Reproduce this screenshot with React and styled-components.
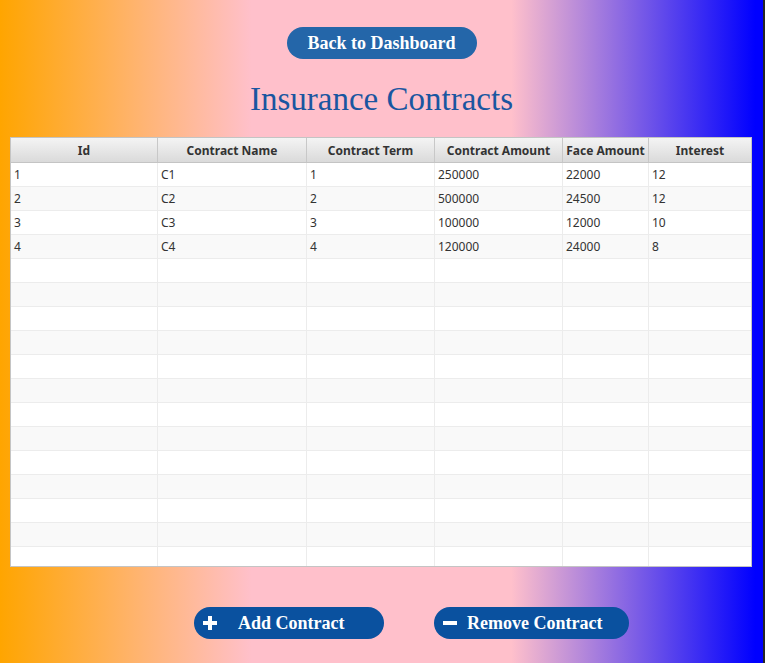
import React from "react";
import styled, { createGlobalStyle } from "styled-components";

const Global = createGlobalStyle`
  html, body { margin: 0; padding: 0; background: #2b2b2b; }
  #root { width: 765px; height: 663px; }
`;

const Frame = styled.div`
  width: 763px;
  height: 661px;
  border-right: 2px solid #262626;
  border-bottom: 2px solid #333333;
  background: linear-gradient(to right, #ffa500 0%, #ffc0cb 33%, #ffc0cb 67%, #0000ff 99%);
  display: flex;
  flex-direction: column;
  align-items: center;
  padding-top: 27px;
  box-sizing: content-box;
  overflow: hidden;
`;

const PillButton = styled.button`
  height: 32px;
  width: ${(p) => p.$w}px;
  border: none;
  border-radius: 16px;
  background: ${(p) => p.$bg};
  color: #ffffff;
  font-family: "Liberation Serif", "Times New Roman", serif;
  font-weight: bold;
  font-size: 18px;
  display: flex;
  align-items: center;
  justify-content: ${(p) => (p.$icon ? "flex-start" : "center")};
  padding: 0 0 0 ${(p) => (p.$icon ? 9 : 0)}px;
  cursor: pointer;
  box-sizing: border-box;
`;

const IconBox = styled.span`
  display: inline-flex;
  width: 14px;
  height: 14px;
  margin-right: ${(p) => p.$gap}px;
`;

const Title = styled.h1`
  margin: 20px 0 0;
  font-family: "Liberation Serif", "Times New Roman", serif;
  font-weight: normal;
  font-size: 33px;
  line-height: 40px;
  color: #1a56a0;
`;

const Table = styled.div`
  margin-top: 18px;
  align-self: flex-start;
  margin-left: 10px;
  width: 742px;
  height: 430px;
  background: #ffffff;
  border: 1px solid #c4c4c4;
  box-sizing: border-box;
  overflow: hidden;
  font-family: "Noto Sans", "Open Sans", sans-serif;
  font-size: 12px;
  color: #333333;
`;

const cols = "147px 149px 128px 128px 86px 1fr";

const HeaderRow = styled.div`
  display: grid;
  grid-template-columns: ${cols};
  height: 24px;
  background: linear-gradient(to bottom, #f4f4f4, #dadada);
  border-bottom: 1px solid #c4c4c4;
`;

const HeaderCell = styled.div`
  display: flex;
  align-items: center;
  justify-content: center;
  font-weight: bold;
  color: #333333;
  border-right: 1px solid #c8c8c8;
  &:last-child { border-right: none; }
`;

const Row = styled.div`
  display: grid;
  grid-template-columns: ${cols};
  height: 24px;
  background: ${(p) => (p.$odd ? "#f9f9f9" : "#ffffff")};
  border-bottom: 1px solid #ececec;
  box-sizing: border-box;
`;

const Cell = styled.div`
  display: flex;
  align-items: center;
  padding-left: 3px;
  border-right: 1px solid #ececec;
  &:last-child { border-right: none; }
`;

const Footer = styled.div`
  margin-top: 40px;
  align-self: flex-start;
  margin-left: 194px;
  display: flex;
  gap: 50px;
`;

const Plus = () => (
  <svg width="14" height="14" viewBox="0 0 14 14">
    <rect x="5" y="0" width="4" height="14" fill="#fff" />
    <rect x="0" y="5" width="14" height="4" fill="#fff" />
  </svg>
);

const Minus = () => (
  <svg width="14" height="14" viewBox="0 0 14 14">
    <rect x="0" y="5" width="14" height="4" fill="#fff" />
  </svg>
);

const headers = ["Id", "Contract Name", "Contract Term", "Contract Amount", "Face Amount", "Interest"];
const data = [
  ["1", "C1", "1", "250000", "22000", "12"],
  ["2", "C2", "2", "500000", "24500", "12"],
  ["3", "C3", "3", "100000", "12000", "10"],
  ["4", "C4", "4", "120000", "24000", "8"],
];
const rows = Array.from({ length: 18 }, (_, i) => data[i] || ["", "", "", "", "", ""]);

export default function App() {
  return (
    <>
      <Global />
      <Frame>
        <PillButton $w={190} $bg="#2466a9">Back to Dashboard</PillButton>
        <Title>Insurance Contracts</Title>
        <Table>
          <HeaderRow>
            {headers.map((h) => (
              <HeaderCell key={h}>{h}</HeaderCell>
            ))}
          </HeaderRow>
          {rows.map((r, i) => (
            <Row key={i} $odd={i % 2 === 1}>
              {r.map((c, j) => (
                <Cell key={j}>{c}</Cell>
              ))}
            </Row>
          ))}
        </Table>
        <Footer>
          <PillButton $w={190} $bg="#0a519f" $icon>
            <IconBox $gap={21}><Plus /></IconBox>
            Add Contract
          </PillButton>
          <PillButton $w={195} $bg="#0a519f" $icon>
            <IconBox $gap={10}><Minus /></IconBox>
            Remove Contract
          </PillButton>
        </Footer>
      </Frame>
    </>
  );
}
